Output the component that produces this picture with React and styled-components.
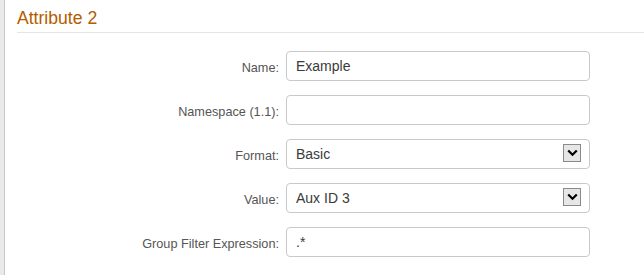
import React from "react";
import styled, { createGlobalStyle } from "styled-components";

const GlobalStyle = createGlobalStyle`
  html, body {
    margin: 0;
    padding: 0;
    background: #ffffff;
    font-family: "Liberation Sans", Arial, sans-serif;
  }
`;

const Page = styled.div`
  display: flex;
  height: 275px;
  overflow: hidden;
`;

const SideStrip = styled.div`
  width: 4px;
  flex: none;
  background: #e9e9e9;
  border-right: 1px solid #c8c8c8;
`;

const Panel = styled.div`
  flex: 1;
  padding-left: 12px;
`;

const Heading = styled.h2`
  margin: 0;
  padding: 8px 0 4px 0;
  font-size: 17.6px;
  line-height: 20px;
  font-weight: normal;
  color: #b35c00;
  border-bottom: 1px solid #e6e6e6;
`;

const Form = styled.div`
  display: grid;
  grid-template-columns: 262px 304px;
  column-gap: 7px;
  row-gap: 14px;
  padding-top: 18px;
`;

const Label = styled.label`
  display: flex;
  align-items: center;
  justify-content: flex-end;
  padding-top: 4px;
  font-size: 12.7px;
  color: #555555;
`;

const Field = styled.div`
  position: relative;
  box-sizing: border-box;
  height: 30px;
  border: 1px solid #c9c9c9;
  border-radius: 4px;
  background: #ffffff;
  display: flex;
  align-items: center;
  padding-left: 9px;
  font-size: 14px;
  color: #3a3a3a;
`;

const ArrowBox = styled.span`
  position: absolute;
  right: 8px;
  top: 4px;
  width: 18px;
  height: 18px;
  box-sizing: border-box;
  border: 1px solid #8a8a8a;
  background: #e6e6e6;
  display: flex;
  align-items: center;
  justify-content: center;
`;

function Select({ value }) {
  return (
    <Field>
      {value}
      <ArrowBox>
        <svg width="11" height="8" viewBox="0 0 11 8">
          <path d="M1.2 1.5 L5.5 5.8 L9.8 1.5" fill="none" stroke="#000" strokeWidth="2.2" />
        </svg>
      </ArrowBox>
    </Field>
  );
}

export default function App() {
  return (
    <Page>
      <GlobalStyle />
      <SideStrip />
      <Panel>
        <Heading>Attribute 2</Heading>
        <Form>
          <Label>Name:</Label>
          <Field>Example</Field>
          <Label>Namespace (1.1):</Label>
          <Field />
          <Label>Format:</Label>
          <Select value="Basic" />
          <Label>Value:</Label>
          <Select value="Aux ID 3" />
          <Label>Group Filter Expression:</Label>
          <Field>.*</Field>
        </Form>
      </Panel>
    </Page>
  );
}
